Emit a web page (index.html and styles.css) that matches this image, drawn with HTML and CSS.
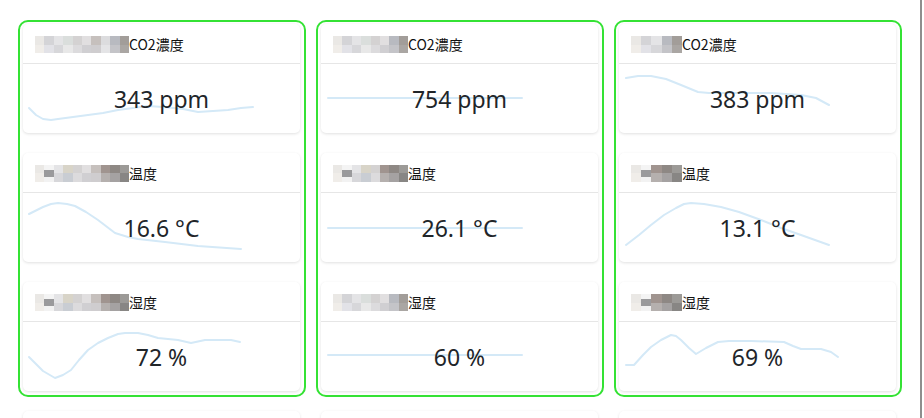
FILE: index.html
```html
<!DOCTYPE html>
<html lang="ja">
<head>
    <meta charset="UTF-8">
    <meta name="viewport" content="width=device-width, initial-scale=1.0">
    <title>センサー</title>
    <link rel="stylesheet" href="styles.css">
</head>
<body>
    <div class="page">
        <div class="row">
            <!-- room 1 -->
            <div class="room">
                <div class="card">
                    <div class="card-header"><span class="mosaic lg"><i></i><i></i><i></i><i></i><i></i><i></i><i></i><i></i><i></i><i></i></span>CO2濃度</div>
                    <div class="card-body">
                        <svg class="spark" viewBox="0 0 277 69"><polyline points="6,44 13,51 20,55 28,56 35,55 50,53 65,51 80,49 95,46 110,44 125,42 140,43 160,45 175,48 190,47 205,46 218,44 230,43"/></svg>
                        <div class="value">343 ppm</div>
                    </div>
                </div>
                <div class="card">
                    <div class="card-header"><span class="mosaic lg dark"><i></i><i></i><i></i><i></i><i></i><i></i><i></i><i></i><i></i><i></i></span>温度</div>
                    <div class="card-body">
                        <svg class="spark" viewBox="0 0 277 69"><polyline points="6,21 20,14 28,11 35,10 44,11 52,13 63,19 75,27 92,40 105,44 115,46 142,49 175,53 218,56"/></svg>
                        <div class="value">16.6 °C</div>
                    </div>
                </div>
                <div class="card">
                    <div class="card-header"><span class="mosaic lg dark"><i></i><i></i><i></i><i></i><i></i><i></i><i></i><i></i><i></i><i></i></span>湿度</div>
                    <div class="card-body">
                        <svg class="spark" viewBox="0 0 277 69"><polyline points="6,35 20,49 32,56 40,53 48,48 56,38 65,28 75,21 85,16 95,12 102,11 115,11 125,13 135,16 155,18 168,21 182,18 208,18 217,20"/></svg>
                        <div class="value">72 %</div>
                    </div>
                </div>
            </div>

            <!-- room 2 -->
            <div class="room">
                <div class="card">
                    <div class="card-header"><span class="mosaic md"><i></i><i></i><i></i><i></i><i></i><i></i><i></i><i></i></span>CO2濃度</div>
                    <div class="card-body">
                        <svg class="spark" viewBox="0 0 277 69"><polyline points="7,34 201,34"/></svg>
                        <div class="value">754 ppm</div>
                    </div>
                </div>
                <div class="card">
                    <div class="card-header"><span class="mosaic md dark"><i></i><i></i><i></i><i></i><i></i><i></i><i></i><i></i></span>温度</div>
                    <div class="card-body">
                        <svg class="spark" viewBox="0 0 277 69"><polyline points="7,35 201,35"/></svg>
                        <div class="value">26.1 °C</div>
                    </div>
                </div>
                <div class="card">
                    <div class="card-header"><span class="mosaic md"><i></i><i></i><i></i><i></i><i></i><i></i><i></i><i></i></span>湿度</div>
                    <div class="card-body">
                        <svg class="spark" viewBox="0 0 277 69"><polyline points="7,33 201,33"/></svg>
                        <div class="value">60 %</div>
                    </div>
                </div>
            </div>

            <!-- room 3 -->
            <div class="room">
                <div class="card">
                    <div class="card-header"><span class="mosaic sm"><i></i><i></i><i></i><i></i><i></i></span>CO2濃度</div>
                    <div class="card-body">
                        <svg class="spark" viewBox="0 0 277 69"><polyline points="7,14 19,12 32,12 47,15 62,21 79,28 90,29 102,29 122,29 152,29 182,31 197,34 210,41"/></svg>
                        <div class="value">383 ppm</div>
                    </div>
                </div>
                <div class="card">
                    <div class="card-header"><span class="mosaic sm dark"><i></i><i></i><i></i><i></i><i></i></span>温度</div>
                    <div class="card-body">
                        <svg class="spark" viewBox="0 0 277 69"><polyline points="7,52 20,42 32,32 45,22 57,15 65,11 72,10 85,11 102,14 120,19 142,27 162,35 182,42 210,52"/></svg>
                        <div class="value">13.1 °C</div>
                    </div>
                </div>
                <div class="card">
                    <div class="card-header"><span class="mosaic sm dark"><i></i><i></i><i></i><i></i><i></i></span>湿度</div>
                    <div class="card-body">
                        <svg class="spark" viewBox="0 0 277 69"><polyline points="7,43 15,43 24,33 32,25 42,18 52,13 57,14 62,18 70,26 77,32 87,26 99,20 110,19 132,19 165,20 174,24 182,27 202,27 212,30 219,35"/></svg>
                        <div class="value">69 %</div>
                    </div>
                </div>
            </div>
        </div>

        <!-- next row, mostly below the fold -->
        <div class="row">
            <div class="room plain"><div class="card blank"></div></div>
            <div class="room plain"><div class="card blank"></div></div>
            <div class="room plain"><div class="card blank"></div></div>
        </div>
    </div>
</body>
</html>
```

FILE: styles.css
```css
html {
    overflow: hidden;
}
body {
    margin: 0;
    font-family: "Noto Sans", "Noto Sans CJK JP", sans-serif;
    color: #212529;
    background: #fff;
}
.page {
    min-height: 418px;
    padding: 20px 0 0 18px;
    border-right: 2px solid #8e8e8e;
    box-sizing: border-box;
    width: 922px;
}
.row {
    display: flex;
    gap: 10px;
    margin-bottom: 10px;
}
.room {
    width: 288px;
    box-sizing: border-box;
    border: 2px solid #34e234;
    border-radius: 10px;
    padding: 2px 4px 4px 3px;
    display: flex;
    flex-direction: column;
    gap: 20px;
}
.room.plain {
    border-color: transparent;
}
.card {
    background: #fff;
    border-radius: 5px;
    box-shadow: 0 1px 3px rgba(0, 0, 0, 0.12);
}
.card.blank {
    height: 109px;
}
.card-header {
    display: flex;
    align-items: center;
    height: 39px;
    padding: 0 12px;
    border-bottom: 1px solid #e6e6e6;
    font-family: "Noto Sans CJK JP", sans-serif;
    font-size: 14px;
    line-height: 20px;
    color: #111;
}
.card-body {
    position: relative;
    height: 69px;
    padding-top: 18px;
    box-sizing: border-box;
}
.spark {
    position: absolute;
    left: 0;
    top: 0;
    width: 277px;
    height: 69px;
}
.spark polyline {
    fill: none;
    stroke: #d4e9f7;
    stroke-width: 2;
    stroke-linejoin: round;
    stroke-linecap: round;
}
.value {
    position: relative;
    text-align: center;
    font-size: 23px;
    line-height: 34px;
}

/* blurred room names */
.mosaic {
    display: flex;
    height: 17px;
    margin-top: 1px;
}
.mosaic.lg { width: 94px; }
.mosaic.md { width: 75px; }
.mosaic.sm { width: 51px; }
.mosaic i {
    flex: 1;
    background: linear-gradient(#dcdcde 50%, #e4e4e6 50%);
}
.mosaic i:nth-child(1) { background: linear-gradient(#eae8e5 50%, #f0ede9 50%); }
.mosaic i:nth-child(2) { background: linear-gradient(#d4d4d7 50%, #e2e2e7 50%); }
.mosaic i:nth-child(3) { background: linear-gradient(#e4e4e6 50%, #d7d7da 50%); }
.mosaic i:nth-child(4) { background: linear-gradient(#dadedc 50%, #e8e8e8 50%); }
.mosaic i:nth-child(5) { background: linear-gradient(#d4d2d2 50%, #dcdbdd 50%); }
.mosaic i:nth-child(6) { background: linear-gradient(#e1dfe0 50%, #d0cfd2 50%); }
.mosaic i:nth-child(7) { background: linear-gradient(#c6c0bd 50%, #cfcdcf 50%); }
.mosaic i:nth-last-child(2) { background: linear-gradient(#b8bac0 50%, #c4c4c8 50%); }
.mosaic i:nth-last-child(1) { background: linear-gradient(#a29d99 50%, #aaa6a3 50%); }
.mosaic.dark i:nth-child(2) { background: linear-gradient(#f4f4f4 30%, #9a9a9c 30%, #9a9a9c 70%, #f2f2f2 70%); }
.mosaic.dark i:nth-child(4) { background: linear-gradient(#d8d4c8 50%, #c9cdd3 50%); }
.mosaic.dark i:nth-last-child(3) { background: linear-gradient(#a0948f 50%, #b5b0ae 50%); }
.mosaic.dark i:nth-last-child(2) { background: linear-gradient(#8e8884 50%, #a5a2a2 50%); }
.mosaic.dark i:nth-last-child(1) { background: linear-gradient(#9c9a97 50%, #888684 50%); }
```
